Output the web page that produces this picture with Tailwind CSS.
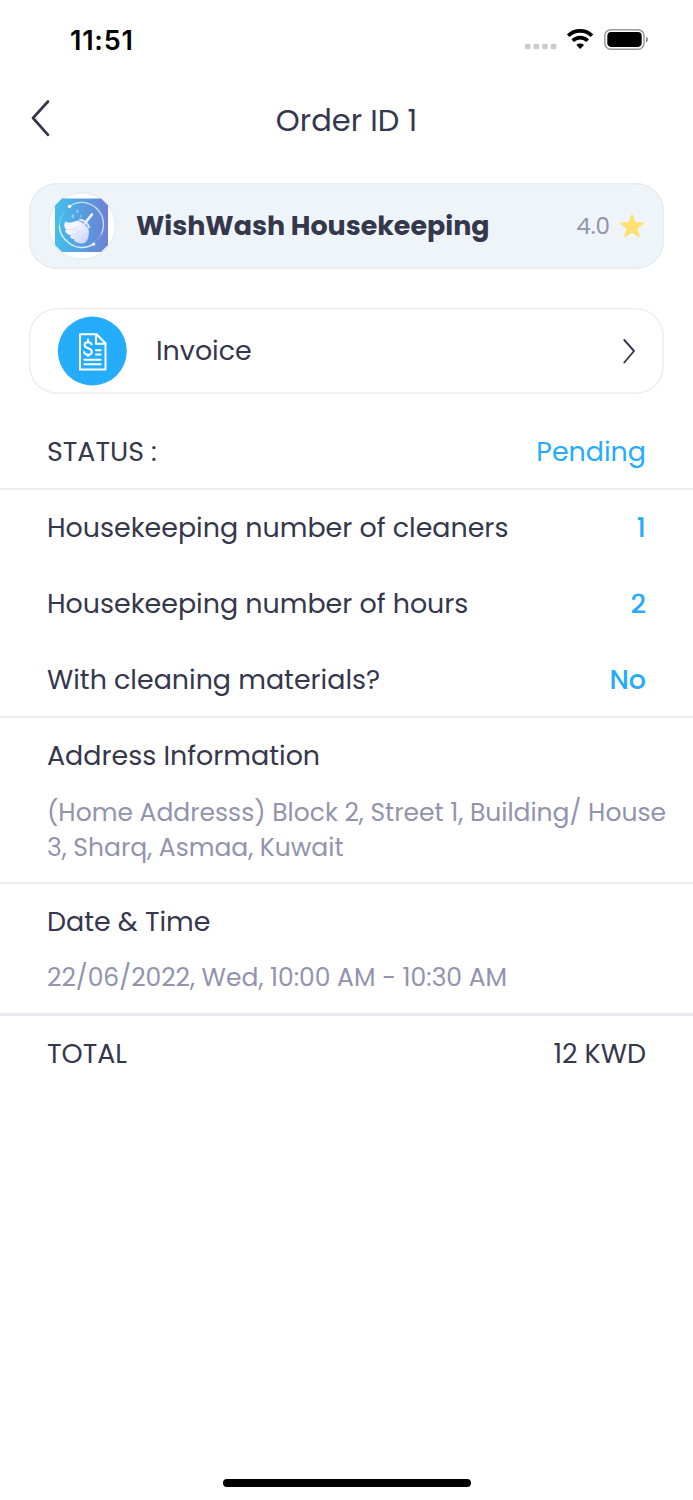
<!DOCTYPE html>
<html lang="en">
<head>
<meta charset="utf-8">
<title>Order ID 1</title>
<script src="https://cdn.jsdelivr.net/npm/@tailwindcss/browser@4"></script>
</head>
<body class="bg-white">
<main class="w-[693px] h-[1500px] flex flex-col overflow-hidden font-[Poppins,Inter,sans-serif] text-[26.9px] leading-none text-[#35374c] whitespace-nowrap">

  <!-- Status bar -->
  <div class="h-[80px] flex items-center justify-between pl-[70px] pr-[44px] text-black shrink-0">
    <span class="font-semibold text-[27px] tracking-[0.75px] font-[Inter,sans-serif]">11:51</span>
    <svg class="w-[125px] h-[24px]" viewBox="0 0 125 24">
      <g fill="#cbcbcb"><rect x="1" y="15.800" width="5.500" height="5.500" rx="1.500"/><rect x="9.700" y="15.800" width="5.500" height="5.500" rx="1.500"/><rect x="18.200" y="15.800" width="5.500" height="5.500" rx="1.500"/><rect x="26.800" y="15.800" width="5.500" height="5.500" rx="1.500"/></g>
      <g fill="none" stroke="#000" stroke-width="3.600"><path d="M44.200 7.700a17 17 0 0 1 23.800 0"/><path d="M48.700 12.700a10.600 10.600 0 0 1 15 0"/></g>
      <path d="M52.400 17a5.600 5.600 0 0 1 7.600 0l-3.800 4.100z"/>
      <rect x="80.800" y="1.700" width="39.200" height="19.600" rx="6" fill="none" stroke="#999" stroke-width="1.500"/>
      <rect x="83.300" y="4.100" width="34.400" height="14.800" rx="3.800"/>
      <path d="M122 8.400c2.800 1.200 2.800 5 0 6.300z" fill="#999"/>
    </svg>
  </div>

  <!-- Title bar -->
  <header class="h-[82px] grid grid-cols-[60px_1fr_60px] items-center shrink-0">
    <svg class="w-[24px] h-[40px] ml-[29px] -mt-[6px]" viewBox="0 0 24 40"><path d="M19 3.500L4 20l15 16.800" fill="none" stroke="#35374c" stroke-width="2.700" stroke-linecap="round" stroke-linejoin="round"/></svg>
    <h1 class="text-center text-[30.5px]">Order ID 1</h1>
  </header>

  <!-- Provider -->
  <section class="mt-[20.5px] mx-[29px] h-[86.5px] rounded-[28px] shadow-[inset_0_0_0_1.5px_#e3edf4] bg-[#eff4f8] flex items-center px-[19px] shrink-0">
    <svg class="w-[68px] h-[68px] shrink-0" viewBox="0 0 68 68">
      <defs>
        <linearGradient id="sky"><stop offset="0" stop-color="#43c0ea"/><stop offset=".5" stop-color="#559fdf"/><stop offset="1" stop-color="#6f80d5"/></linearGradient>
        <linearGradient id="bristle" x2="1" y2="1"><stop offset=".3" stop-color="#f6f8ff"/><stop offset="1" stop-color="#c5d0f8"/></linearGradient>
      </defs>
      <circle cx="34" cy="34" r="33.300" fill="#fff" stroke="#e3edf4" stroke-width="1.400"/>
      <path d="M14 6.500h39l7 7v39.500l-7 7h-39l-7-7V13.500z" fill="url(#sky)"/>
      <g fill="none" stroke="#dcecfb" stroke-linecap="round">
        <path d="M21.300 14.500C27 10.500 34 9.400 40.500 11.600 49.500 14.700 55.500 23 55.500 32.500c0 3.500-.7 6.500-2.200 9.500" stroke-width="1.300" opacity=".85"/>
        <path d="M53.300 42a22 22 0 0 1-6 7.500" stroke-width=".6" opacity=".5"/>
        <path d="M45.500 52.200C38 57 28 56.500 21 51 15 46.500 11.500 40.500 11.300 34" stroke-width="1.500"/>
        <path d="M11.300 34c0-6 2-10.500 5-14" stroke-width=".7" opacity=".6"/>
        <path d="M43.900 22.500l-7.200 9" stroke="#f3f6ff" stroke-width="2.600"/>
      </g>
      <circle cx="21.500" cy="14.500" r="1.700" fill="#fff"/><circle cx="45.600" cy="52.100" r="1.700" fill="#fff"/>
      <path d="M17.500 29.500c2 1.200 4.200 1.400 6.500.8 2.500-.8 4.500-1.800 7.500-1.800l9 7.500c.8 4.500.5 9-1.500 12.500-1 2-3 3-5.500 3-3-.2-5-1-7-2.500l-.5-2c-1.500.3-3-.5-4-2l.8-1.800c-2.500-.4-4.800-2-5.800-4.200l1.200-1.500c-2-1.700-2.700-5-.7-8z" fill="url(#bristle)"/>
      <path d="M31.300 27.600c4 .2 8.500 3.600 10.200 8.200" fill="none" stroke="#dfe8fc" stroke-width="2"/>
      <path d="M31 29.300c4 .6 7.300 3.200 8.900 7" fill="none" stroke="#8fb0e8" stroke-width=".6"/>
      <path d="M18.500 37.500c4 .5 8-.5 11-1.800M22.500 43.500c4-.5 7-2 10-4.500" fill="none" stroke="#c9d4f5" stroke-width=".6"/>
      <path d="M25 22v4.500M23.500 24.200h3M29.300 17.500v3.500M28 19.300h2.600M32.800 22.500v3" stroke="#bcdaf8" stroke-width=".8"/>
    </svg>
    <strong class="ml-[20px] pt-[2px] font-bold">WishWash Housekeeping</strong>
    <span class="ml-auto pt-[2px] text-[23px] text-[#9293ad]">4.0</span>
    <svg class="w-[26px] h-[25px] ml-[9px]" viewBox="0 0 26 25"><path d="M13 1.500l3.200 8.100 8.600.5-6.700 5.400 2.200 8.400-7.300-4.700-7.300 4.700 2.200-8.400L1.200 10.100l8.600-.5z" fill="#ffe071" stroke="#ffe071" stroke-linejoin="round"/></svg>
  </section>

  <!-- Invoice link -->
  <section class="mt-[39px] mx-[29px] h-[86px] rounded-[28px] shadow-[inset_0_0_0_1.5px_#ececf2] flex items-center pl-[28px] pr-[27px] shrink-0">
    <svg class="w-[70px] h-[70px] shrink-0" viewBox="0 0 70 70">
      <circle cx="35.300" cy="35" r="34.500" fill="#25acfb"/>
      <g fill="none" stroke="#fff" stroke-width="2" stroke-linejoin="round" stroke-linecap="round">
        <path d="M23 18.200h16.500l9 9v26.200H23zM39 18.500v9.300h9.300"/>
        <path d="M34.600 28.400c-.6-1.600-2-2.300-3.600-2.200-2 0-3.500 1-3.500 2.900 0 4.200 7.300 2.200 7.300 6.600 0 2-1.700 3.100-3.800 3.100-2 0-3.500-.9-4-2.700M31 23.500v2.700M31 38.800v1.200M38.900 34.200h4.700M38.900 38.600h4.700M27.400 43.700h16.200M27.400 48.300h16.200"/>
      </g>
    </svg>
    <span class="ml-[29px]">Invoice</span>
    <svg class="w-[16px] h-[28px] ml-auto" viewBox="0 0 16 28"><path d="M3.300 3L13 14 3.300 25.500" fill="none" stroke="#35374c" stroke-width="1.900" stroke-linecap="round" stroke-linejoin="round"/></svg>
  </section>

  <!-- Order details -->
  <dl class="mt-[20px] shrink-0">
    <div class="h-[76px] flex items-center justify-between px-[47px] pt-[2px] border-b-2 border-[#ededf3]">
      <dt>STATUS :</dt><dd class="text-[#25acfb]">Pending</dd>
    </div>
    <div class="h-[76px] flex items-center justify-between px-[47px]">
      <dt>Housekeeping number of cleaners</dt><dd class="text-[#25acfb] font-medium">1</dd>
    </div>
    <div class="h-[76px] flex items-center justify-between px-[47px]">
      <dt>Housekeeping number of hours</dt><dd class="text-[#25acfb] font-medium">2</dd>
    </div>
    <div class="h-[76px] flex items-center justify-between px-[47px] pt-[2px] border-b-2 border-[#ededf3]">
      <dt>With cleaning materials?</dt><dd class="text-[#25acfb] font-medium">No</dd>
    </div>
    <div class="h-[166px] pl-[47px] border-b-2 border-[#ededf3]">
      <dt class="h-[76px] flex items-center">Address Information</dt>
      <dd class="pt-px text-[25px] leading-[35px] text-[#9293ad]">(Home Addresss) Block 2, Street 1, Building/ House<br>3, Sharq, Asmaa, Kuwait</dd>
    </div>
    <div class="h-[132px] pl-[47px] border-b-[3px] border-[#ebecf1]">
      <dt class="h-[76px] flex items-center">Date &amp; Time</dt>
      <dd class="text-[25px] leading-[35px] text-[#9293ad]">22/06/2022, Wed, 10:00 AM - 10:30 AM</dd>
    </div>
    <div class="h-[76px] flex items-center justify-between px-[47px]">
      <dt>TOTAL</dt><dd>12 KWD</dd>
    </div>
  </dl>

  <!-- Home indicator -->
  <div class="mt-auto mb-[13px] mx-auto w-[248px] h-[8px] rounded-full bg-black shrink-0"></div>
</main>
</body>
</html>
